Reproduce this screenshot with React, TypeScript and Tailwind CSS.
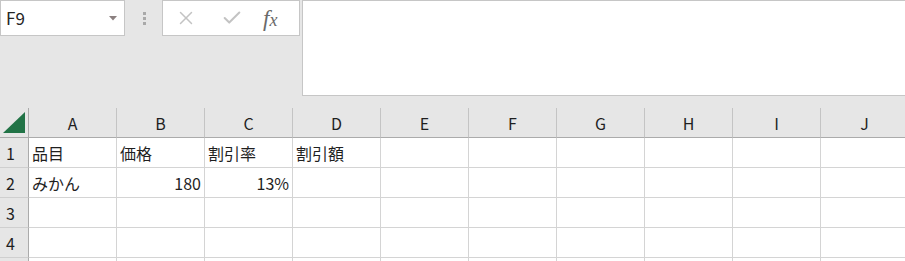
import { X, Check } from 'lucide-react';

const cols = ['A', 'B', 'C', 'D', 'E', 'F', 'G', 'H', 'I', 'J'];

type Cell = { text: string; right?: boolean };

const rows: Cell[][] = [
  [{ text: '品目' }, { text: '価格' }, { text: '割引率' }, { text: '割引額' }],
  [{ text: 'みかん' }, { text: '180', right: true }, { text: '13%', right: true }],
  [],
  [],
];

const font = { fontFamily: '"Noto Sans CJK JP", "Noto Sans", sans-serif' };

export default function App() {
  return (
    <div className="w-[905px] h-[261px] overflow-hidden bg-[#e6e6e6] text-[#1f1f1f]" style={font}>
      {/* formula bar area */}
      <div className="flex items-start h-[108px]">
        <div className="w-[125px] h-[36px] bg-white border border-[#c6c6c6] flex items-center justify-between pl-[5px] pr-[7px]">
          <span className="text-[17px] text-[#262626]">F9</span>
          <svg width="8" height="5" viewBox="0 0 8 5">
            <path d="M0 0 H8 L4 4.5 Z" fill="#8b8080" />
          </svg>
        </div>
        <div className="w-[37px] h-[36px] flex flex-col items-center justify-center gap-[2px] pl-[2px]">
          <div className="w-[3px] h-[3px] bg-[#a9a9a9]" />
          <div className="w-[3px] h-[3px] bg-[#a9a9a9]" />
          <div className="w-[3px] h-[3px] bg-[#a9a9a9]" />
        </div>
        <div className="w-[138px] h-[36px] bg-white border border-[#c6c6c6] flex items-center pl-[12px]">
          <X size={22} strokeWidth={1.6} className="text-[#c3c3c3]" />
          <Check size={22} strokeWidth={2.2} className="text-[#c3c3c3] ml-[24px]" />
          <span
            className="ml-[20px] italic text-[#6a6a6a] text-[23px] leading-none"
            style={{ fontFamily: '"Liberation Serif", serif' }}
          >
            f<span className="text-[18px]">x</span>
          </span>
        </div>
        <div className="ml-[2px] flex-1 h-[96px] bg-white border border-r-0 border-[#c6c6c6]" />
      </div>

      {/* column headers */}
      <div className="flex h-[30px]">
        <div className="w-[29px] shrink-0 border-r border-b border-[#ababab] flex items-end justify-start pl-[3px] pb-[4px]">
          <svg width="22" height="21" viewBox="0 0 22 21">
            <path d="M22 0 V21 H0 Z" fill="#217346" />
          </svg>
        </div>
        {cols.map((c) => (
          <div
            key={c}
            className="w-[88px] shrink-0 border-r border-[#c4c4c4] border-b-[1px] border-b-[#ababab] flex items-center justify-center text-[16px]"
          >
            {c}
          </div>
        ))}
      </div>

      {/* grid rows */}
      {rows.map((r, i) => (
        <div key={i} className="flex h-[30px]">
          <div className="w-[29px] shrink-0 border-r border-r-[#ababab] border-b border-b-[#cfcfcf] flex items-center pl-[6px] text-[16px]">
            {i + 1}
          </div>
          {cols.map((c, j) => {
            const cell = r[j];
            return (
              <div
                key={c}
                className={`w-[88px] shrink-0 bg-white border-r border-b border-[#d4d4d4] flex items-center text-[16px] px-[3px] ${
                  cell?.right ? 'justify-end' : 'justify-start'
                }`}
              >
                {cell?.text}
              </div>
            );
          })}
        </div>
      ))}

      {/* partially visible next row */}
      <div className="flex h-[30px]">
        <div className="w-[29px] shrink-0 border-r border-r-[#ababab]" />
        {cols.map((c) => (
          <div key={c} className="w-[88px] shrink-0 bg-white border-r border-[#d4d4d4]" />
        ))}
      </div>
    </div>
  );
}
